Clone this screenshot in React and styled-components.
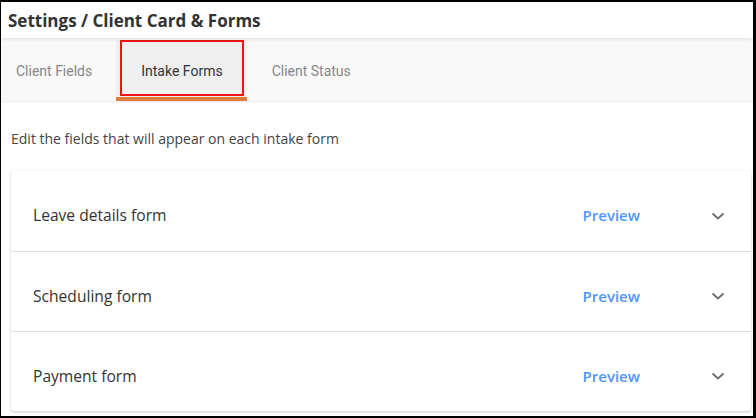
import React from "react";
import styled, { createGlobalStyle } from "styled-components";

const Global = createGlobalStyle`
  html, body { margin: 0; padding: 0; background: #fff; }
  * { box-sizing: border-box; }
`;

const Frame = styled.div`
  width: 756px;
  height: 418px;
  border-style: solid;
  border-color: #000;
  border-width: 2px 3px 2px 1px;
  background: #fff;
  display: flex;
  flex-direction: column;
  overflow: hidden;
  font-family: "Open Sans", "Liberation Sans", sans-serif;
`;

const Header = styled.header`
  height: 36px;
  display: flex;
  align-items: center;
  padding: 1px 0 0 7px;
  font-size: 17px;
  font-weight: 700;
  color: #333;
  background: #fff;
  position: relative;
  z-index: 2;
  box-shadow: 0 1px 4px rgba(0, 0, 0, 0.12);
`;

const TabBar = styled.nav`
  height: 63px;
  display: flex;
  align-items: stretch;
  padding-top: 2px;
  background: #f9f9f9;
  box-shadow: 0 1px 2px rgba(0, 0, 0, 0.1);
  position: relative;
  z-index: 1;
`;

const Tab = styled.div`
  position: relative;
  display: flex;
  align-items: center;
  padding: ${(p) => (p.$first ? "5px 24px 0 15px" : "5px 24px 0 25px")};
  font-family: Roboto, "Liberation Sans", sans-serif;
  font-size: 14px;
  color: ${(p) => (p.$active ? "#333" : "#888")};
  background: ${(p) => (p.$active ? "#efefef" : "transparent")};
  border-bottom: 4px solid ${(p) => (p.$active ? "#e07b39" : "transparent")};
`;

const Highlight = styled.span`
  position: absolute;
  left: 4px;
  right: 3px;
  top: 0;
  bottom: 1px;
  border: 2px solid #f01414;
  pointer-events: none;
`;

const Body = styled.main`
  padding: 28px 2px 0 10px;
  display: flex;
  flex-direction: column;
`;

const Intro = styled.p`
  margin: 0 0 23px 0;
  font-size: 14px;
  color: #444;
  line-height: 19px;
`;

const Card = styled.section`
  background: #fff;
  border-radius: 3px;
  box-shadow: 0 1px 3px rgba(0, 0, 0, 0.22);
`;

const Row = styled.div`
  height: 80px;
  display: flex;
  align-items: center;
  padding: 8px 26px 0 22px;
  border-top: ${(p) => (p.$first ? "none" : "1px solid #dedede")};
`;

const Title = styled.div`
  flex: 1;
  font-size: 15.6px;
  color: #333;
`;

const Preview = styled.a`
  font-size: 15px;
  font-weight: 600;
  color: #4f95fb;
  text-decoration: none;
  margin-right: 71px;
`;

const ChevronSvg = styled.svg`
  margin-top: 1px;
`;

const Chevron = () => (
  <ChevronSvg width="14" height="8" viewBox="0 0 14 8" fill="none">
    <path d="M1.5 1.5 L7 6.5 L12.5 1.5" stroke="#6b6b6b" strokeWidth="1.8" />
  </ChevronSvg>
);

const forms = ["Leave details form", "Scheduling form", "Payment form"];

export default function App() {
  return (
    <>
      <Global />
      <Frame>
        <Header>Settings / Client Card &amp; Forms</Header>
        <TabBar>
          <Tab $first>Client Fields</Tab>
          <Tab $active>
            Intake Forms
            <Highlight />
          </Tab>
          <Tab>Client Status</Tab>
        </TabBar>
        <Body>
          <Intro>Edit the fields that will appear on each intake form</Intro>
          <Card>
            {forms.map((f, i) => (
              <Row key={f} $first={i === 0}>
                <Title>{f}</Title>
                <Preview>Preview</Preview>
                <Chevron />
              </Row>
            ))}
          </Card>
        </Body>
      </Frame>
    </>
  );
}
